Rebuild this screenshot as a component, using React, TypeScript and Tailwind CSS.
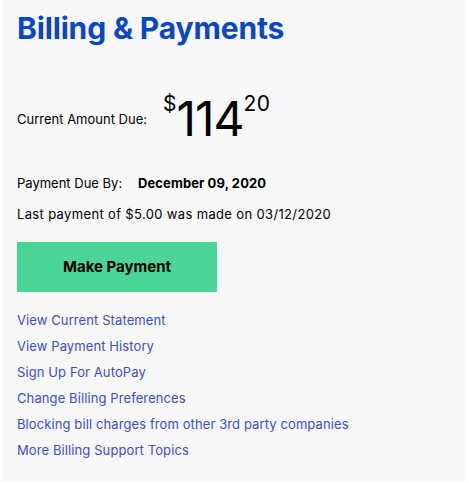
import React from "react";

const links = [
  "View Current Statement",
  "View Payment History",
  "Sign Up For AutoPay",
  "Change Billing Preferences",
  "Blocking bill charges from other 3rd party companies",
  "More Billing Support Topics",
];

export default function App() {
  return (
    <div className="w-[469px] h-[483px] bg-white pl-[2px] pr-[4px] pb-[2px]" style={{ fontFamily: "Inter, 'Noto Sans', sans-serif" }}>
      <div className="h-full bg-[#f7f7f7] pl-[15px] pt-[8px]">
        <h1 className="text-[30px] leading-[40px] font-bold text-[#0a47c2] tracking-[-0.15px]">Billing &amp; Payments</h1>
        <div className="flex items-start mt-[41px] h-[52px]">
          <span className="text-[13px] text-black mt-[21px] w-[146px]">Current Amount Due:</span>
          <div className="flex items-start text-black leading-none">
            <span className="text-[21px] mt-[4px]">$</span>
            <span className="text-[48px] tracking-[-1px] mt-[6px]">114</span>
            <span className="text-[21px] mt-[4px] tracking-[0.3px]">20</span>
          </div>
        </div>
        <div className="flex items-center mt-[33px] text-[13px] text-black">
          <span className="w-[121px]">Payment Due By:</span>
          <span className="font-bold tracking-[0.1px]">December 09, 2020</span>
        </div>
        <div className="mt-[11px] text-[13px] text-black tracking-[0.35px]">Last payment of $5.00 was made on 03/12/2020</div>
        <button className="mt-[18px] w-[200px] h-[50px] bg-[#4ad597] text-[15px] font-bold text-black">Make Payment</button>
        <ul className="mt-[19px] flex flex-col gap-[8px]">
          {links.map((l) => (
            <li key={l} className="text-[13px] leading-[18px] text-[#3b4fc2] tracking-[0.1px]">{l}</li>
          ))}
        </ul>
      </div>
    </div>
  );
}
